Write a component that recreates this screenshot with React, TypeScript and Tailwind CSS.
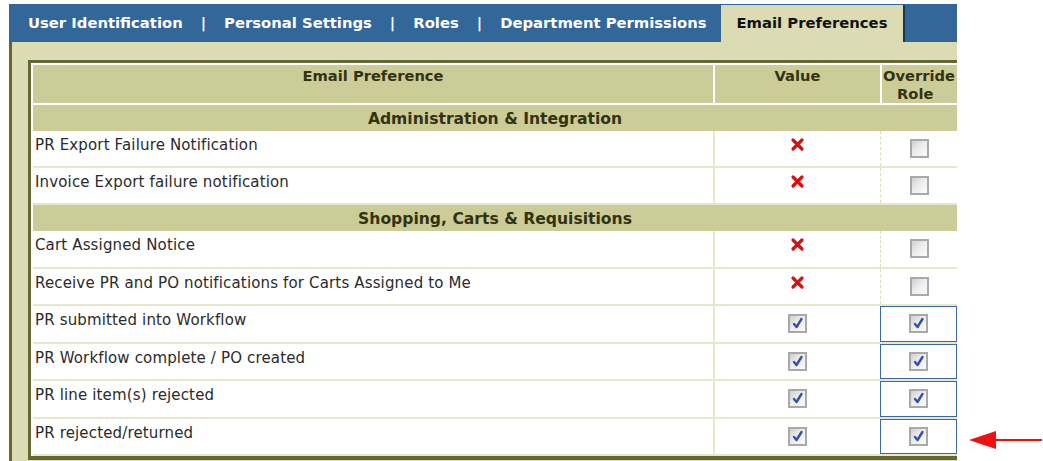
import React from "react";

type Row = {
  label: string;
  checked: boolean;
};

const sections: { title: string; rows: Row[]; rowH: string }[] = [
  {
    title: "Administration & Integration",
    rowH: "h-[37px]",
    rows: [
      { label: "PR Export Failure Notification", checked: false },
      { label: "Invoice Export failure notification", checked: false },
    ],
  },
  {
    title: "Shopping, Carts & Requisitions",
    rowH: "h-[37.5px]",
    rows: [
      { label: "Cart Assigned Notice", checked: false },
      { label: "Receive PR and PO notifications for Carts Assigned to Me", checked: false },
      { label: "PR submitted into Workflow", checked: true },
      { label: "PR Workflow complete / PO created", checked: true },
      { label: "PR line item(s) rejected", checked: true },
      { label: "PR rejected/returned", checked: true },
    ],
  },
];

function Checkbox({ checked }: { checked: boolean }) {
  return (
    <span className="flex h-[19px] w-[19px] items-center justify-center border-2 border-[#a9a9a9] bg-[linear-gradient(135deg,#cfcfcf_0%,#ececec_45%,#fbfbfb_100%)]">
      {checked && (
        <svg width="13" height="13" viewBox="0 0 13 13">
          <path
            d="M3 7 L5.5 10 L10.5 2"
            fill="none"
            stroke="#3450a8"
            strokeWidth="2.4"
            strokeLinecap="round"
            strokeLinejoin="round"
          />
        </svg>
      )}
    </span>
  );
}

function RedX() {
  return (
    <svg width="15" height="15" viewBox="0 0 15 15">
      <path
        d="M3 3 L12 12 M12 3 L3 12"
        stroke="#d81010"
        strokeWidth="3.2"
        strokeLinecap="round"
      />
    </svg>
  );
}

function DataRow({ row, rowH }: { row: Row; rowH: string }) {
  return (
    <div className={`flex ${rowH} border-b-2 border-[#e7e7cb] bg-white`}>
      <div className="w-[680px] shrink-0 pl-[2px] pt-[5px] text-[15px] leading-[18px] tracking-[0.15px] text-[#2b2b2b]">
        {row.label}
      </div>
      <div className="flex w-[167px] shrink-0 justify-center border-l-2 border-[#e7e7cb]">
        {row.checked ? (
          <div className="flex items-center">
            <Checkbox checked />
          </div>
        ) : (
          <div className="pt-[6px]">
            <RedX />
          </div>
        )}
      </div>
      {row.checked ? (
        <div className="flex w-[77px] shrink-0 items-center justify-center border-[1.5px] border-[#3a69a2]">
          <Checkbox checked />
        </div>
      ) : (
        <div className="flex w-[77px] shrink-0 items-center justify-center border-l border-dashed border-[#dcdcbc]">
          <Checkbox checked={false} />
        </div>
      )}
    </div>
  );
}

export default function App() {
  return (
    <div className="relative h-[461px] w-[1043px] overflow-hidden bg-white font-['DejaVu_Sans',Verdana,sans-serif]">
      <div className="ml-[9px] flex h-full w-[948px] flex-col overflow-hidden pt-[4px]">
        {/* tab strip */}
        <div className="flex h-[38px] shrink-0 bg-[#336699]">
          <div className="flex w-[712px] shrink-0 items-center pl-[19px] text-[14.8px] font-bold text-white">
            <span>User Identification</span>
            <span className="mx-[18px]">|</span>
            <span>Personal Settings</span>
            <span className="mx-[18px]">|</span>
            <span>Roles</span>
            <span className="mx-[18px]">|</span>
            <span>Department Permissions</span>
          </div>
          <div className="mt-[1px] flex w-[184px] shrink-0 items-center justify-center border-r-2 border-[#1c3553] bg-[#dcdcb4] text-[14.8px] font-bold text-[#111]">
            Email Preferences
          </div>
        </div>

        {/* panel */}
        <div className="flex-1 border-l-[3px] border-[#666633] bg-[#dcdcb4] pl-[16px] pt-[18px]">
          <div className="w-[940px] border-[3px] border-b-[4px] border-[#666633] bg-white px-[2px] pt-[2px]">
            <div className="flex h-[40px] gap-[2px] border-b-2 border-white">
              <div className="w-[680px] shrink-0 bg-[#cccc99] pt-[2px] text-center text-[14.7px] font-bold leading-[18px] text-[#333311]">
                Email Preference
              </div>
              <div className="w-[165px] shrink-0 bg-[#cccc99] pt-[2px] text-center text-[14.7px] font-bold leading-[18px] text-[#333311]">
                Value
              </div>
              <div className="w-[88px] shrink-0 bg-[#cccc99] pt-[2px] pl-[1px] text-left text-[14.7px] font-bold leading-[18px] text-[#333311]">
                Override
                <div className="pl-[14px]">Role</div>
              </div>
            </div>

            {sections.map((s) => (
              <div key={s.title}>
                <div className="flex h-[26px] w-[924px] items-center justify-center bg-[#cccc99] pt-[3px] text-[15.6px] font-bold text-[#333311]">
                  {s.title}
                </div>
                {s.rows.map((r) => (
                  <DataRow key={r.label} row={r} rowH={s.rowH} />
                ))}
              </div>
            ))}
          </div>
        </div>
      </div>

      {/* pointer arrow */}
      <svg
        className="absolute left-[966px] top-[429px]"
        width="77"
        height="22"
        viewBox="0 0 77 22"
      >
        <path d="M3 11 L30 2 L30 20 Z" fill="#ee1111" />
        <path d="M28 11 L76 11" stroke="#ee1111" strokeWidth="2" />
      </svg>
    </div>
  );
}
